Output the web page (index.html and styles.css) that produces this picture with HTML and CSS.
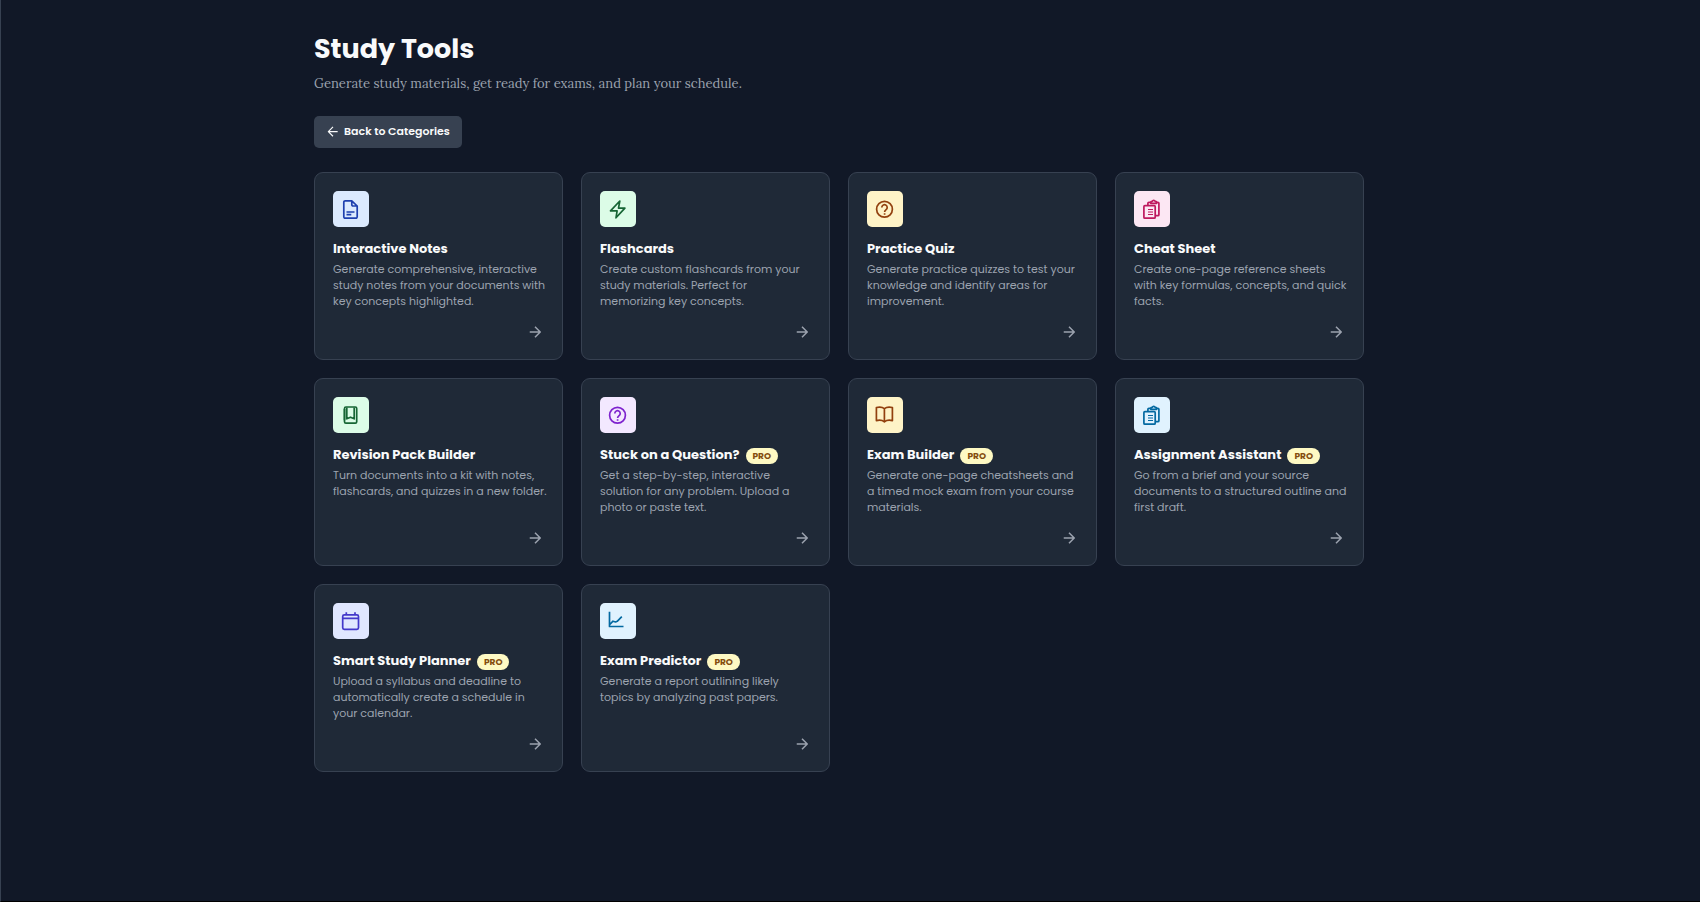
FILE: index.html
```html
<!DOCTYPE html>
<html lang="en">
<head>
<meta charset="utf-8">
<title>Study Tools</title>
<link rel="stylesheet" href="styles.css">
</head>
<body>
<svg class="sprite" aria-hidden="true">
  <symbol id="arrow" viewBox="0 0 24 24"><path d="M5 12h14M12 5l7 7-7 7"/></symbol>
  <symbol id="help" viewBox="0 0 36 36"><circle cx="17.5" cy="18.3" r="7.9"/><path d="M14.8 16.4a2.7 2.7 0 1 1 4.3 2.2c-.9.7-1.500 1.200-1.500 2.400M17.600 22.200v1.600"/></symbol>
  <symbol id="clipboards" viewBox="0 0 36 36"><rect x="9.900" y="14.700" width="11.300" height="12.500" rx="1"/><path d="M13.900 14.500v-2.200a1 1 0 0 1 1-1h1.900M22.600 11.300h1.300a1 1 0 0 1 1 1v11.400a1 1 0 0 1-1 1h-2.600M16.800 12.300v-1a1 1 0 0 1 1-1h.5a1.500 1.500 0 0 1 2.800 0h.5a1 1 0 0 1 1 1v1z"/><path stroke-width="1.200" d="M14 18.500h5M14 21h5M14 23.500h5"/></symbol>
</svg>
<main class="page">
  <div class="content">
    <header class="head">
      <h1 class="heading">Study Tools</h1>
      <p class="lead">Generate study materials, get ready for exams, and plan your schedule.</p>
      <button class="back" type="button"><svg class="back-icon" viewBox="0 0 24 24" aria-hidden="true"><path d="M20 13H5M12 5l-8 8 8 8"/></svg>Back to Categories</button>
    </header>
    <section class="grid" aria-label="Tools">
      <a class="card" href="#notes">
        <span class="tile blue"><svg viewBox="0 0 36 36"><path d="M18.800 9.800h-6.600a1.400 1.400 0 0 0-1.400 1.400v14.600a1.400 1.400 0 0 0 1.400 1.400h10.600a1.400 1.400 0 0 0 1.400-1.400V15zM18.800 10v3.800a1.200 1.200 0 0 0 1.200 1.200h4M13.500 21h8M13.500 23.600h4.800"/></svg></span>
        <h2 class="title">Interactive Notes</h2>
        <p class="text">Generate comprehensive, interactive study notes from your documents with key concepts highlighted.</p>
        <svg class="go"><use href="#arrow"/></svg>
      </a>
      <a class="card" href="#flashcards">
        <span class="tile green"><svg viewBox="0 0 36 36"><path d="M19.800 10l-9.300 9.800h6.600L16 26.800l8.900-9.700h-6.400z"/></svg></span>
        <h2 class="title">Flashcards</h2>
        <p class="text">Create custom flashcards from your study materials. Perfect for memorizing key concepts.</p>
        <svg class="go"><use href="#arrow"/></svg>
      </a>
      <a class="card" href="#quiz">
        <span class="tile amber"><svg><use href="#help"/></svg></span>
        <h2 class="title">Practice Quiz</h2>
        <p class="text">Generate practice quizzes to test your knowledge and identify areas for improvement.</p>
        <svg class="go"><use href="#arrow"/></svg>
      </a>
      <a class="card" href="#cheatsheet">
        <span class="tile pink"><svg><use href="#clipboards"/></svg></span>
        <h2 class="title">Cheat Sheet</h2>
        <p class="text">Create one-page reference sheets with key formulas, concepts, and quick facts.</p>
        <svg class="go"><use href="#arrow"/></svg>
      </a>
      <a class="card" href="#revision">
        <span class="tile green"><svg viewBox="0 0 36 36"><rect x="11.500" y="10" width="12.200" height="16.200" rx="1.400"/><path d="M13.800 10.400v11.400l3.700-1.600 3.700 1.600V10.400M11.500 23.200V12"/></svg></span>
        <h2 class="title">Revision Pack Builder</h2>
        <p class="text">Turn documents into a kit with notes, flashcards, and quizzes in a new folder.</p>
        <svg class="go"><use href="#arrow"/></svg>
      </a>
      <a class="card" href="#question">
        <span class="tile purple"><svg><use href="#help"/></svg></span>
        <h2 class="title">Stuck on a Question? <span class="badge">PRO</span></h2>
        <p class="text">Get a step-by-step, interactive solution for any problem. Upload a photo or paste text.</p>
        <svg class="go"><use href="#arrow"/></svg>
      </a>
      <a class="card" href="#exam">
        <span class="tile amber"><svg viewBox="0 0 36 36"><path d="M17.400 11.600c-2-1.600-5-1.800-8-1.100v13.100c3-.7 6-.4 8 1.200 2-1.600 5-1.900 8-1.200V10.500c-3-.7-6-.5-8 1.100zM17.400 11.600v13.200"/></svg></span>
        <h2 class="title">Exam Builder <span class="badge">PRO</span></h2>
        <p class="text">Generate one-page cheatsheets and a timed mock exam from your course materials.</p>
        <svg class="go"><use href="#arrow"/></svg>
      </a>
      <a class="card" href="#assignment">
        <span class="tile sky"><svg><use href="#clipboards"/></svg></span>
        <h2 class="title">Assignment Assistant <span class="badge">PRO</span></h2>
        <p class="text">Go from a brief and your source documents to a structured outline and first draft.</p>
        <svg class="go"><use href="#arrow"/></svg>
      </a>
      <a class="card" href="#planner">
        <span class="tile indigo"><svg viewBox="0 0 36 36"><rect x="9.700" y="11.800" width="15.800" height="14.600" rx="1.600"/><path d="M9.700 15.300h15.800M13.300 9.300v2.500M22 9.300v2.500"/></svg></span>
        <h2 class="title">Smart Study Planner <span class="badge">PRO</span></h2>
        <p class="text">Upload a syllabus and deadline to automatically create a schedule in your calendar.</p>
        <svg class="go"><use href="#arrow"/></svg>
      </a>
      <a class="card" href="#predictor">
        <span class="tile sky"><svg viewBox="0 0 36 36"><path d="M9.500 8.800v14.700h14M9.800 21.500l3.200-3.300 2.600.8 1.600-.7 4.600-4.600"/></svg></span>
        <h2 class="title">Exam Predictor <span class="badge">PRO</span></h2>
        <p class="text">Generate a report outlining likely topics by analyzing past papers.</p>
        <svg class="go"><use href="#arrow"/></svg>
      </a>
    </section>
  </div>
</main>
</body>
</html>
```
FILE: styles.css
```css
* { box-sizing: border-box; }

body {
  margin: 0;
  min-height: 100vh;
  display: flex;
  background: #111827;
  color: #f9fafb;
  font-family: Poppins, Inter, sans-serif;
}

.sprite { display: none; }

svg {
  fill: none;
  stroke: currentColor;
  stroke-width: 2;
  stroke-linejoin: round;
}

.page {
  flex: 1;
  padding: 32px 23px 32px 0;
  border-left: 1px solid #374151;
  border-bottom: 1px solid #000;
}

.content {
  max-width: 1050px;
  margin: 0 auto;
}

.head { margin-bottom: 24px; }

.heading {
  margin: 0;
  font-size: 27px;
  line-height: 34px;
  font-weight: 700;
}

.lead {
  margin: 6px 0 20px;
  color: #9ca3af;
  font-family: Lora, "Liberation Serif", serif;
  font-size: 13px;
  line-height: 24px;
}

.back {
  display: flex;
  align-items: center;
  gap: 4px;
  height: 32px;
  padding: 0 12px 2px;
  border: 0;
  border-radius: 5px;
  background: #374151;
  color: #f9fafb;
  font: inherit;
  font-size: 11px;
  font-weight: 600;
}

.back-icon {
  width: 14px;
  height: 14px;
}

.grid {
  display: grid;
  grid-template-columns: repeat(4, minmax(0, 1fr));
  gap: 18px;
}

.card {
  display: flex;
  flex-direction: column;
  min-height: 188px;
  padding: 18px;
  border: 1px solid #374151;
  border-radius: 9px;
  background: #1f2937;
  color: inherit;
  text-decoration: none;
}

.tile {
  width: 36px;
  height: 36px;
  border-radius: 5px;
}

.tile svg {
  display: block;
  width: 36px;
  height: 36px;
  stroke-width: 1.7;
}

.blue { background: #dbeafe; color: #1e40af; }
.green { background: #dcfce7; color: #166534; }
.amber { background: #fef3c7; color: #92400e; }
.pink { background: #fce7f3; color: #be185d; }
.purple { background: #f3e8ff; color: #7e22ce; }
.sky { background: #e0f2fe; color: #0369a1; }
.indigo { background: #e0e7ff; color: #4338ca; }

.title {
  display: flex;
  align-items: center;
  gap: 6px;
  margin: 12px 0 0;
  font-size: 13px;
  line-height: 20px;
  font-weight: 700;
}

.badge {
  height: 16px;
  margin-top: 2px;
  padding: 0 7px;
  border-radius: 8px;
  background: #fef9c3;
  color: #854d0e;
  font-size: 9px;
  line-height: 16px;
  font-weight: 700;
}

.text {
  margin: 2px -3px 0 0;
  color: #9ca3af;
  font-size: 11px;
  line-height: 16px;
}

.go {
  width: 18px;
  height: 18px;
  margin-top: auto;
  align-self: flex-end;
  color: #9ca3af;
}
```
